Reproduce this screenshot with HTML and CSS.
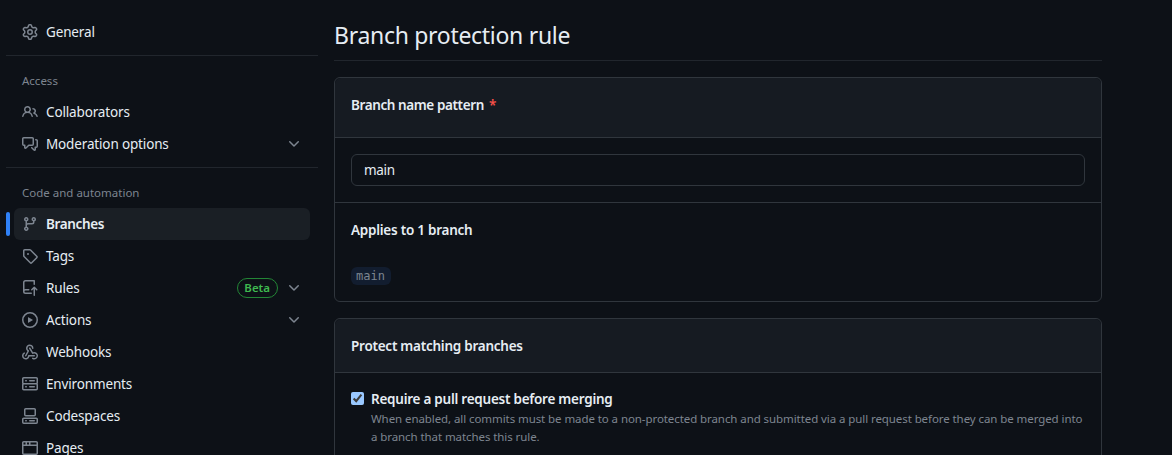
FILE: index.html
```html
<!DOCTYPE html>
<html lang="en">

<head>
    <meta charset="UTF-8">
    <meta name="viewport" content="width=device-width, initial-scale=1.0">
    <title>Branch protection rule</title>
    <link rel="stylesheet" href="styles.css">
</head>

<body>
    <div class="layout">
        <nav class="sidebar">
            <a class="nav-item" href="#general">
                <svg class="nav-icon" viewBox="0 0 16 16"><path d="M8 0a8.2 8.2 0 0 1 .701.031C9.444.095 9.99.645 10.16 1.29l.288 1.107c.018.066.079.158.212.224.231.114.454.243.668.386.123.082.233.09.299.071l1.103-.303c.644-.176 1.392.021 1.82.63.27.385.506.792.704 1.218.315.675.111 1.422-.364 1.891l-.814.806c-.049.048-.098.147-.088.294.016.257.016.515 0 .772-.01.147.038.246.088.294l.814.806c.475.469.679 1.216.364 1.891a7.977 7.977 0 0 1-.704 1.217c-.428.61-1.176.807-1.82.63l-1.102-.302c-.067-.019-.177-.011-.3.071a5.909 5.909 0 0 1-.668.386c-.133.066-.194.158-.211.224l-.29 1.106c-.168.646-.715 1.196-1.458 1.26a8.006 8.006 0 0 1-1.402 0c-.743-.064-1.289-.614-1.458-1.26l-.289-1.106c-.018-.066-.079-.158-.212-.224a5.738 5.738 0 0 1-.668-.386c-.123-.082-.233-.09-.299-.071l-1.103.303c-.644.176-1.392-.021-1.82-.63a8.12 8.12 0 0 1-.704-1.218c-.315-.675-.111-1.422.363-1.891l.815-.806c.05-.048.098-.147.088-.294a6.214 6.214 0 0 1 0-.772c.01-.147-.038-.246-.088-.294l-.815-.806C.635 6.045.431 5.298.746 4.623a7.92 7.92 0 0 1 .704-1.217c.428-.61 1.176-.807 1.82-.63l1.102.302c.067.019.177.011.3-.071.214-.143.437-.272.668-.386.133-.066.194-.158.211-.224l.29-1.106C6.009.645 6.556.095 7.299.03 7.53.01 7.764 0 8 0Zm-.571 1.525c-.036.003-.108.036-.137.146l-.289 1.105c-.147.561-.549.967-.998 1.189-.173.086-.34.183-.5.29-.417.278-.97.423-1.529.27l-1.103-.303c-.109-.03-.175.016-.195.045-.22.312-.412.644-.573.99-.014.031-.021.11.059.19l.815.806c.411.406.562.957.53 1.456a4.709 4.709 0 0 0 0 .582c.032.499-.119 1.05-.53 1.456l-.815.806c-.081.08-.073.159-.059.19.162.346.353.677.573.989.02.03.085.076.195.046l1.102-.303c.56-.153 1.113-.008 1.53.27.161.107.328.204.501.29.447.222.85.629.997 1.189l.289 1.105c.029.109.101.143.137.146a6.6 6.6 0 0 0 1.142 0c.036-.003.108-.036.137-.146l.289-1.105c.147-.561.549-.967.998-1.189.173-.086.34-.183.5-.29.417-.278.97-.423 1.529-.27l1.103.303c.109.029.175-.016.195-.045.22-.313.411-.644.573-.99.014-.031.021-.11-.059-.19l-.815-.806c-.411-.406-.562-.957-.53-1.456a4.709 4.709 0 0 0 0-.582c-.032-.499.119-1.05.53-1.456l.815-.806c.081-.08.073-.159.059-.19a6.464 6.464 0 0 0-.573-.989c-.02-.03-.085-.076-.195-.046l-1.102.303c-.56.153-1.113.008-1.53-.27a4.44 4.44 0 0 0-.501-.29c-.447-.222-.85-.629-.997-1.189l-.289-1.105c-.029-.11-.101-.143-.137-.146a6.6 6.6 0 0 0-1.142 0ZM11 8a3 3 0 1 1-6 0 3 3 0 0 1 6 0ZM9.5 8a1.5 1.5 0 1 0-3.001.001A1.5 1.5 0 0 0 9.5 8Z"/></svg>
                <span class="nav-label">General</span>
            </a>

            <div class="nav-divider"></div>
            <h2 class="nav-group">Access</h2>

            <a class="nav-item" href="#collaborators">
                <svg class="nav-icon" viewBox="0 0 16 16"><path d="M2 5.5a3.5 3.5 0 1 1 5.898 2.549 5.508 5.508 0 0 1 3.034 4.084.75.75 0 1 1-1.482.235 4 4 0 0 0-7.9 0 .75.75 0 0 1-1.482-.236A5.507 5.507 0 0 1 3.102 8.05 3.493 3.493 0 0 1 2 5.5ZM11 4a3.001 3.001 0 0 1 2.22 5.018 5.01 5.01 0 0 1 2.56 3.012.749.749 0 0 1-.885.954.752.752 0 0 1-.549-.514 3.507 3.507 0 0 0-2.522-2.372.75.75 0 0 1-.574-.73v-.352a.75.75 0 0 1 .416-.672A1.5 1.5 0 0 0 11 5.5.75.75 0 0 1 11 4Zm-5.5-.5a2 2 0 1 0-.001 3.999A2 2 0 0 0 5.5 3.5Z"/></svg>
                <span class="nav-label">Collaborators</span>
            </a>
            <a class="nav-item" href="#moderation">
                <svg class="nav-icon" viewBox="0 0 16 16"><path d="M1.75 1h8.5c.966 0 1.75.784 1.75 1.75v5.5A1.75 1.75 0 0 1 10.25 10H7.061l-2.574 2.573A1.458 1.458 0 0 1 2 11.543V10h-.25A1.75 1.75 0 0 1 0 8.25v-5.5C0 1.784.784 1 1.75 1ZM1.5 2.75v5.5c0 .138.112.25.25.25h1a.75.75 0 0 1 .75.75v2.19l2.72-2.72a.749.749 0 0 1 .53-.22h3.5a.25.25 0 0 0 .25-.25v-5.5a.25.25 0 0 0-.25-.25h-8.5a.25.25 0 0 0-.25.25Zm13 2a.25.25 0 0 0-.25-.25h-.5a.75.75 0 0 1 0-1.5h.5c.966 0 1.75.784 1.75 1.75v5.5A1.75 1.75 0 0 1 14.25 12H14v1.543a1.458 1.458 0 0 1-2.487 1.03L9.22 12.28a.749.749 0 0 1 .326-1.275.749.749 0 0 1 .734.215l2.22 2.22v-2.19a.75.75 0 0 1 .75-.75h1a.25.25 0 0 0 .25-.25Z"/></svg>
                <span class="nav-label">Moderation options</span>
                <svg class="nav-chevron" viewBox="0 0 16 16"><path d="M12.78 5.22a.749.749 0 0 1 0 1.06l-4.25 4.25a.749.749 0 0 1-1.06 0L3.22 6.28a.749.749 0 1 1 1.06-1.06L8 8.939l3.72-3.719a.749.749 0 0 1 1.06 0Z"/></svg>
            </a>

            <div class="nav-divider"></div>
            <h2 class="nav-group">Code and automation</h2>

            <a class="nav-item current" href="#branches">
                <svg class="nav-icon" viewBox="0 0 16 16"><path d="M9.5 3.25a2.25 2.25 0 1 1 3 2.122V6A2.5 2.5 0 0 1 10 8.5H6a1 1 0 0 0-1 1v1.128a2.251 2.251 0 1 1-1.5 0V5.372a2.25 2.25 0 1 1 1.5 0v1.836A2.493 2.493 0 0 1 6 7h4a1 1 0 0 0 1-1v-.628A2.25 2.25 0 0 1 9.5 3.25Zm-6 0a.75.75 0 1 0 1.5 0 .75.75 0 0 0-1.5 0Zm8.25-.75a.75.75 0 1 0 0 1.5.75.75 0 0 0 0-1.5ZM4.25 12a.75.75 0 1 0 0 1.5.75.75 0 0 0 0-1.5Z"/></svg>
                <span class="nav-label">Branches</span>
            </a>
            <a class="nav-item" href="#tags">
                <svg class="nav-icon" viewBox="0 0 16 16"><path d="M1 7.775V2.75C1 1.784 1.784 1 2.75 1h5.025c.464 0 .91.184 1.238.513l6.25 6.25a1.75 1.75 0 0 1 0 2.474l-5.026 5.026a1.75 1.75 0 0 1-2.474 0l-6.25-6.25A1.752 1.752 0 0 1 1 7.775Zm1.5 0c0 .066.026.13.073.177l6.25 6.25a.25.25 0 0 0 .354 0l5.025-5.025a.25.25 0 0 0 0-.354l-6.25-6.25a.25.25 0 0 0-.177-.073H2.75a.25.25 0 0 0-.25.25ZM6 5a1 1 0 1 1 0 2 1 1 0 0 1 0-2Z"/></svg>
                <span class="nav-label">Tags</span>
            </a>
            <a class="nav-item" href="#rules">
                <svg class="nav-icon" viewBox="0 0 16 16"><path d="M1 2.5A2.5 2.5 0 0 1 3.5 0h8.75a.75.75 0 0 1 .75.75v3.5a.75.75 0 0 1-1.5 0V1.5h-8a1 1 0 0 0-1 1v6.708A2.493 2.493 0 0 1 3.5 9h3.25a.75.75 0 0 1 0 1.5H3.5a1 1 0 0 0 0 2h5.75a.75.75 0 0 1 0 1.5H3.5A2.5 2.5 0 0 1 1 11.5Zm13.23 7.79h-.001l-1.224-1.224v6.184a.75.75 0 0 1-1.5 0V9.066L10.28 10.29a.75.75 0 0 1-1.06-1.06l2.505-2.504a.75.75 0 0 1 1.06 0L15.29 9.23a.751.751 0 0 1-.018 1.042.751.751 0 0 1-1.042.018Z"/></svg>
                <span class="nav-label">Rules</span>
                <span class="beta">Beta</span>
                <svg class="nav-chevron" viewBox="0 0 16 16"><path d="M12.78 5.22a.749.749 0 0 1 0 1.06l-4.25 4.25a.749.749 0 0 1-1.06 0L3.22 6.28a.749.749 0 1 1 1.06-1.06L8 8.939l3.72-3.719a.749.749 0 0 1 1.06 0Z"/></svg>
            </a>
            <a class="nav-item" href="#actions">
                <svg class="nav-icon" viewBox="0 0 16 16"><path d="M8 0a8 8 0 1 1 0 16A8 8 0 0 1 8 0ZM1.5 8a6.5 6.5 0 1 0 13 0 6.5 6.5 0 0 0-13 0Zm4.879-2.773 4.264 2.559a.25.25 0 0 1 0 .428l-4.264 2.559A.25.25 0 0 1 6 10.559V5.442a.25.25 0 0 1 .379-.215Z"/></svg>
                <span class="nav-label">Actions</span>
                <svg class="nav-chevron" viewBox="0 0 16 16"><path d="M12.78 5.22a.749.749 0 0 1 0 1.06l-4.25 4.25a.749.749 0 0 1-1.06 0L3.22 6.28a.749.749 0 1 1 1.06-1.06L8 8.939l3.72-3.719a.749.749 0 0 1 1.06 0Z"/></svg>
            </a>
            <a class="nav-item" href="#webhooks">
                <svg class="nav-icon" viewBox="0 0 16 16"><path d="M5.5 4.25a2.25 2.25 0 0 1 4.5 0 .75.75 0 0 0 1.5 0 3.75 3.75 0 1 0-6.14 2.889l-2.272 4.258a.75.75 0 0 0 1.324.706L7 7.25a.75.75 0 0 0-.309-1.015A2.25 2.25 0 0 1 5.5 4.25Z"/><path d="M7.364 3.607a.75.75 0 0 1 1.03.257l2.608 4.349a3.75 3.75 0 1 1-.628 6.785.75.75 0 0 1 .752-1.299 2.25 2.25 0 1 0-.033-3.88.75.75 0 0 1-1.03-.256L7.107 4.636a.75.75 0 0 1 .257-1.03Z"/><path d="M2.9 8.776A.75.75 0 0 1 2.625 9.8 2.25 2.25 0 1 0 6 11.75a.75.75 0 0 1 .75-.751h5.5a.75.75 0 0 1 0 1.5H7.425a3.751 3.751 0 1 1-5.55-3.998.75.75 0 0 1 1.024.274Z"/></svg>
                <span class="nav-label">Webhooks</span>
            </a>
            <a class="nav-item" href="#environments">
                <svg class="nav-icon" viewBox="0 0 16 16"><path d="M1.75 1h12.5c.966 0 1.75.784 1.75 1.75v4c0 .372-.116.717-.314 1 .198.283.314.628.314 1v4a1.75 1.75 0 0 1-1.75 1.75H1.75A1.75 1.75 0 0 1 0 12.75v-4c0-.358.109-.707.314-1a1.739 1.739 0 0 1-.314-1v-4C0 1.784.784 1 1.75 1ZM1.5 2.75v4c0 .138.112.25.25.25h12.5a.25.25 0 0 0 .25-.25v-4a.25.25 0 0 0-.25-.25H1.75a.25.25 0 0 0-.25.25Zm.25 5.75a.25.25 0 0 0-.25.25v4c0 .138.112.25.25.25h12.5a.25.25 0 0 0 .25-.25v-4a.25.25 0 0 0-.25-.25ZM7 4.75A.75.75 0 0 1 7.75 4h4.5a.75.75 0 0 1 0 1.5h-4.5A.75.75 0 0 1 7 4.75ZM7.75 10h4.5a.75.75 0 0 1 0 1.5h-4.5a.75.75 0 0 1 0-1.5ZM3 4.75A.75.75 0 0 1 3.75 4h.5a.75.75 0 0 1 0 1.5h-.5A.75.75 0 0 1 3 4.75ZM3.75 10h.5a.75.75 0 0 1 0 1.5h-.5a.75.75 0 0 1 0-1.5Z"/></svg>
                <span class="nav-label">Environments</span>
            </a>
            <a class="nav-item" href="#codespaces">
                <svg class="nav-icon" viewBox="0 0 16 16"><path d="M0 11.25c0-.966.784-1.75 1.75-1.75h12.5c.966 0 1.75.784 1.75 1.75v3A1.75 1.75 0 0 1 14.25 16H1.75A1.75 1.75 0 0 1 0 14.25Zm2-9.5C2 .784 2.784 0 3.75 0h8.5C13.216 0 14 .784 14 1.75v5a1.75 1.75 0 0 1-1.75 1.75h-8.5A1.75 1.75 0 0 1 2 6.75Zm1.75-.25a.25.25 0 0 0-.25.25v5c0 .138.112.25.25.25h8.5a.25.25 0 0 0 .25-.25v-5a.25.25 0 0 0-.25-.25Zm-2 9.5a.25.25 0 0 0-.25.25v3c0 .138.112.25.25.25h12.5a.25.25 0 0 0 .25-.25v-3a.25.25 0 0 0-.25-.25Z"/><path d="M7 12.75a.75.75 0 0 1 .75-.75h4.5a.75.75 0 0 1 0 1.5h-4.5a.75.75 0 0 1-.75-.75Zm-4 0a.75.75 0 0 1 .75-.75h.5a.75.75 0 0 1 0 1.5h-.5a.75.75 0 0 1-.75-.75Z"/></svg>
                <span class="nav-label">Codespaces</span>
            </a>
            <a class="nav-item" href="#pages">
                <svg class="nav-icon" viewBox="0 0 16 16"><path d="M0 2.75C0 1.784.784 1 1.75 1h12.5c.966 0 1.75.784 1.75 1.75v10.5A1.75 1.75 0 0 1 14.25 15H1.75A1.75 1.75 0 0 1 0 13.25ZM14.5 6h-13v7.25c0 .138.112.25.25.25h12.5a.25.25 0 0 0 .25-.25Zm-6-3.5v2h6v-1.75a.25.25 0 0 0-.25-.25ZM5 2.5v2h2v-2Zm-3.25 0a.25.25 0 0 0-.25.25V4.5h2v-2Z"/></svg>
                <span class="nav-label">Pages</span>
            </a>
        </nav>

        <main class="content">
            <h1 class="page-title">Branch protection rule</h1>

            <section class="box pattern-box">
                <div class="box-header">
                    <label class="box-title pattern-label" for="pattern">Branch name pattern <span class="required">*</span></label>
                </div>
                <div class="pattern-row">
                    <input class="text-input" type="text" id="pattern" value="main">
                </div>
                <div class="applies">
                    <h3 class="box-title">Applies to 1 branch</h3>
                    <code class="branch-name">main</code>
                </div>
            </section>

            <section class="box">
                <div class="box-header small-header">
                    <h3 class="box-title">Protect matching branches</h3>
                </div>
                <div class="option">
                    <input class="option-check" type="checkbox" id="requirePr" checked>
                    <div>
                        <label class="option-title" for="requirePr">Require a pull request before merging</label>
                        <p class="option-note">When enabled, all commits must be made to a non-protected branch and submitted via a pull request before they can be merged into a branch that matches this rule.</p>
                    </div>
                </div>
            </section>
        </main>
    </div>
</body>
</html>
```

FILE: styles.css
```css
html {
    color-scheme: dark;
    height: 100%;
    overflow: hidden;
}

body {
    font-family: "Noto Sans", "Open Sans", sans-serif;
    font-size: 13.5px;
    color: #e6edf3;
    background-color: #0d1117;
    height: 100%;
    margin: 0;
    overflow: hidden;
}

.layout {
    display: flex;
    align-items: flex-start;
    width: 1096px;
    padding-left: 6px;
    gap: 16px;
}

/* sidebar */

.sidebar {
    width: 312px;
    flex-shrink: 0;
    padding-top: 16px;
}

.nav-item {
    display: flex;
    align-items: center;
    position: relative;
    height: 32px;
    margin-left: 8px;
    margin-right: 8px;
    padding: 0 8px;
    border-radius: 6px;
    color: #e6edf3;
    text-decoration: none;
}

.nav-icon {
    width: 16px;
    height: 16px;
    flex-shrink: 0;
    margin-right: 8px;
    fill: #7d8590;
}

.nav-label {
    flex: 1;
    padding-bottom: 1px;
    letter-spacing: -0.15px;
}

.nav-chevron {
    width: 16px;
    height: 16px;
    flex-shrink: 0;
    fill: #7d8590;
}

.nav-item.current {
    background-color: #1a1f25;
}

.nav-item.current .nav-label {
    font-weight: 600;
    letter-spacing: -0.35px;
}

.nav-item.current::before {
    content: "";
    position: absolute;
    left: -8px;
    top: 4px;
    width: 4px;
    height: 24px;
    border-radius: 6px;
    background-color: #2f81f7;
}

.nav-divider {
    height: 1px;
    margin-top: 7px;
    background-color: #21262d;
}

.nav-group {
    margin: 0;
    padding: 16px 16px 0;
    height: 24px;
    font-size: 11.5px;
    line-height: 18px;
    font-weight: 400;
    color: #7d8590;
}

.beta {
    padding: 0 7px 0 6px;
    margin-right: 8px;
    border: 1px solid #238636;
    border-radius: 2em;
    font-size: 11.5px;
    line-height: 18px;
    font-weight: 600;
    color: #3fb950;
}

/* main column */

.content {
    flex: 1;
    min-width: 0;
}

.page-title {
    margin: 0 0 16px;
    height: 61px;
    padding-top: 16px;
    box-sizing: border-box;
    border-bottom: 1px solid #21262d;
    font-size: 23px;
    line-height: 38px;
    font-weight: 400;
    letter-spacing: -0.3px;
}

.box {
    margin-bottom: 16px;
    border: 1px solid #30363d;
    border-radius: 6px;
}

.box-header {
    display: flex;
    align-items: center;
    height: 60px;
    padding: 0 16px 5px;
    box-sizing: border-box;
    border-bottom: 1px solid #30363d;
    border-radius: 6px 6px 0 0;
    background-color: #161b22;
}

.small-header {
    height: 54px;
    padding-bottom: 0;
}

.box-title {
    margin: 0;
    font-size: 13.5px;
    font-weight: 600;
    letter-spacing: -0.25px;
}

.pattern-label {
    letter-spacing: -0.4px;
}

.required {
    margin-left: 2px;
    color: #f85149;
}

.pattern-row {
    padding: 16px;
    border-bottom: 1px solid #30363d;
}

.text-input {
    display: block;
    box-sizing: border-box;
    width: 100%;
    height: 32px;
    padding: 0 12px;
    border: 1px solid #30363d;
    border-radius: 6px;
    font-family: inherit;
    font-size: 13.5px;
    letter-spacing: -0.3px;
    color: #e6edf3;
    background-color: #0d1117;
    outline: none;
}

.applies {
    height: 98px;
    padding: 17px 16px 0;
    box-sizing: border-box;
}

.applies .box-title {
    line-height: 21px;
}

.branch-name {
    display: inline-block;
    margin-top: 26px;
    padding: 0 6px 0 5px;
    border-radius: 6px;
    font-family: "DejaVu Sans Mono", "Liberation Mono", monospace;
    font-size: 12px;
    line-height: 18px;
    color: #7d8590;
    background-color: #121d2f;
}

.option {
    display: flex;
    padding: 17px 16px;
}

.option-check {
    width: 13px;
    height: 13px;
    margin: 2px 7px 0 0;
    flex-shrink: 0;
}

.option-title {
    display: block;
    font-weight: 600;
    line-height: 18px;
    letter-spacing: -0.25px;
}

.option-note {
    margin: 2px 0 0;
    font-size: 11.5px;
    line-height: 18px;
    color: #7d8590;
    letter-spacing: -0.08px;
}
```
